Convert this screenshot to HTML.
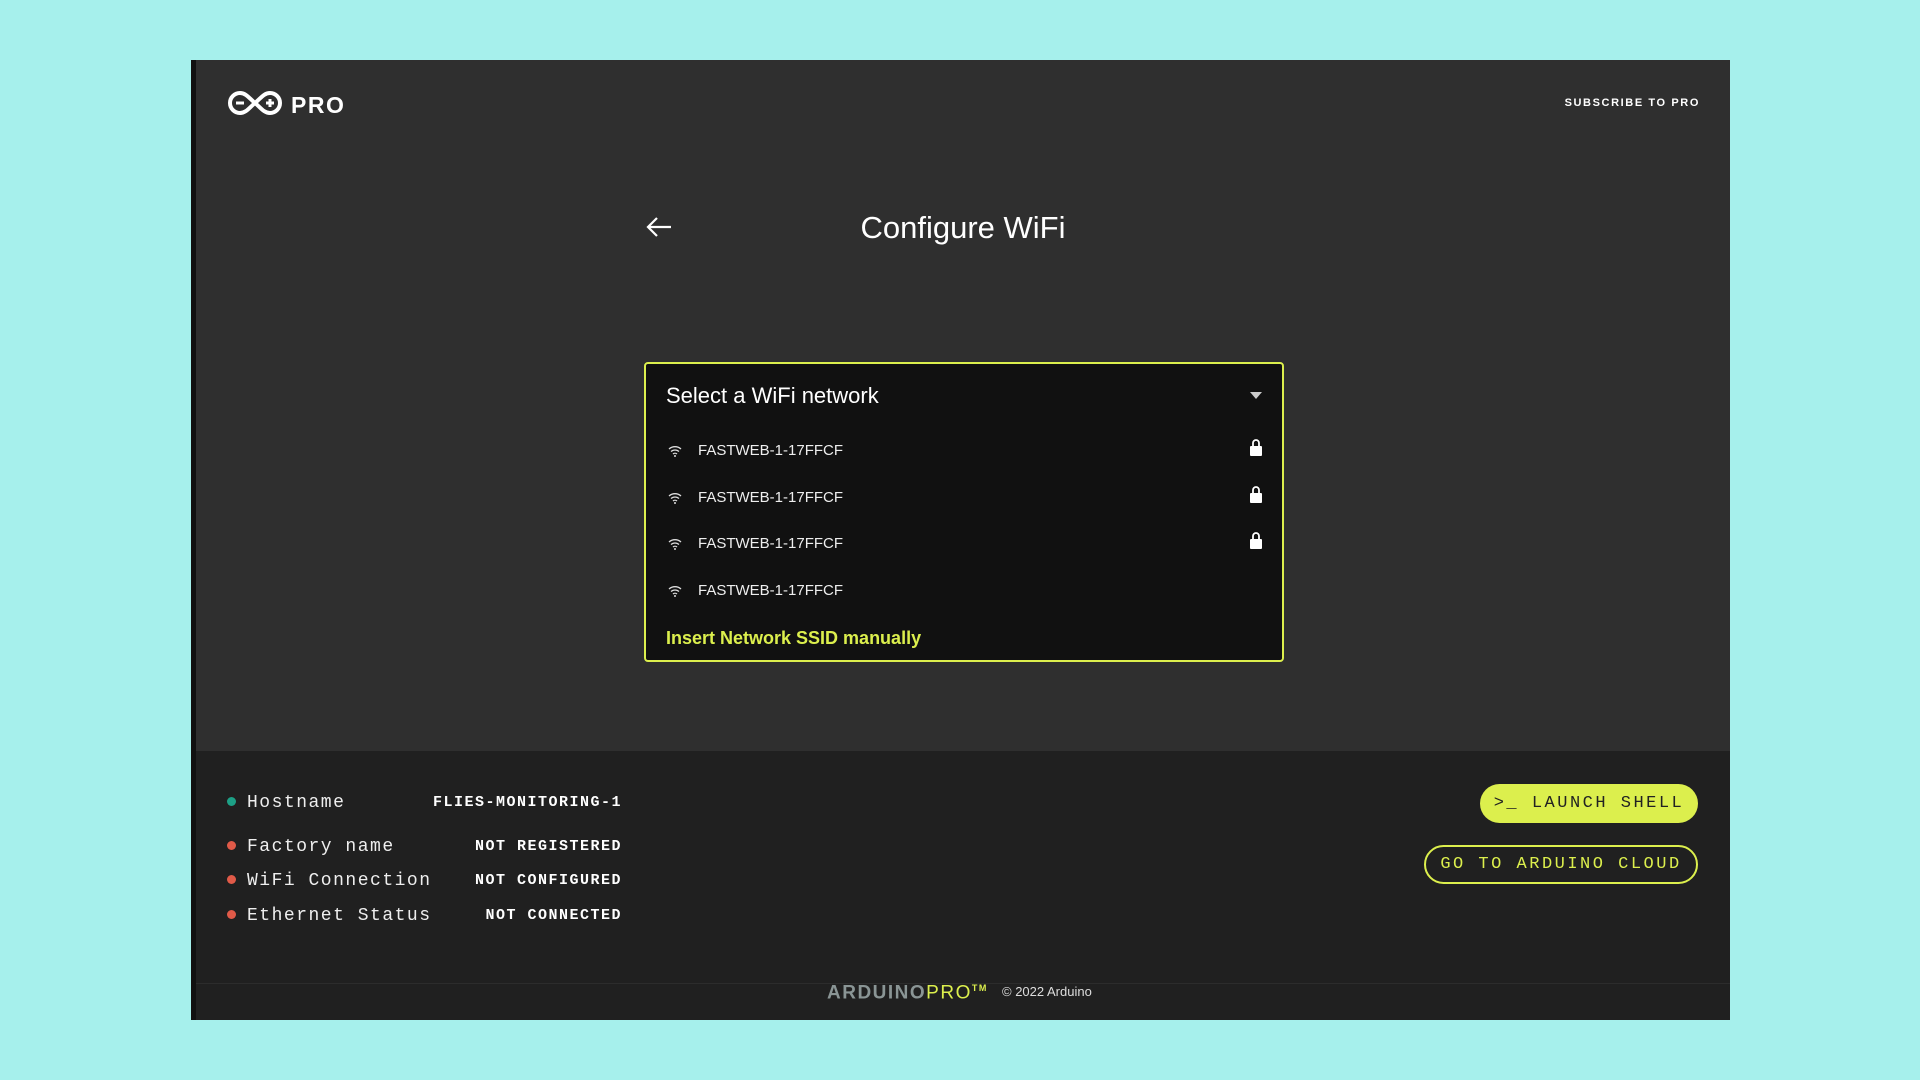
<!DOCTYPE html>
<html><head><meta charset="utf-8"><style>
*{margin:0;padding:0;box-sizing:border-box}
body{width:1920px;height:1080px;background:#a6f0ec;position:relative;overflow:hidden;font-family:"Liberation Sans",sans-serif}
.frame{position:absolute;left:191px;top:60px;width:1539px;height:960px;background:#2f2f2f;border-left:5px solid #111}
.bottom{position:absolute;left:0;right:0;top:691px;bottom:0;background:#202020}
.abs{position:absolute}
.mono{font-family:"Liberation Mono",monospace}
.row{position:absolute;left:0;width:426px;height:20px}
.dot{position:absolute;left:31px;top:4px;width:9px;height:9px;border-radius:50%}
.lab{position:absolute;left:51px;top:0;color:#eee;font-size:18px;letter-spacing:1.5px;line-height:20px}
.val{position:absolute;right:0;top:0;color:#fff;font-size:15px;font-weight:bold;letter-spacing:1.5px;line-height:20px}
.item{position:absolute;left:0;width:100%;height:22px}
.item .t{position:absolute;left:52px;top:0;color:#eee;font-size:15px;line-height:22px}
.item svg.w{position:absolute;left:22px;top:5px}
.item svg.l{position:absolute;right:20px;top:-2px}
</style></head><body>
<div class="frame">
  <svg class="abs" style="left:31px;top:30px" width="56" height="26" viewBox="0 0 56 26">
    <path d="M13 3a10 10 0 1 0 0 20c6 0 9-5 15-10c6-5 9-10 15-10a10 10 0 1 1 0 20c-6 0-9-5-15-10c-6-5-9-10-15-10z" fill="none" stroke="#fff" stroke-width="4"/>
    <rect x="9" y="11.5" width="8" height="3" fill="#fff"/>
    <rect x="39" y="11.5" width="8" height="3" fill="#fff"/><rect x="41.5" y="9" width="3" height="8" fill="#fff"/>
  </svg>
  <div class="abs" style="left:95px;top:31px;color:#fff;font-size:23px;font-weight:bold;letter-spacing:1.5px;line-height:28px">PRO</div>
  <div class="abs" style="right:30px;top:37px;color:#fff;font-size:11px;font-weight:bold;letter-spacing:1.6px">SUBSCRIBE TO PRO</div>

  <svg class="abs" style="left:449px;top:156px" width="28" height="22" viewBox="0 0 28 22"><path d="M26 11H3M12 2L3 11l9 9" fill="none" stroke="#fff" stroke-width="2.2"/></svg>
  <div class="abs" style="left:567px;width:400px;top:148px;text-align:center;color:#fff;font-size:31px;line-height:40px">Configure WiFi</div>

  <div class="abs" style="left:448px;top:302px;width:640px;height:300px;background:#111;border:2px solid #dcef4d;border-radius:4px">
    <div class="abs" style="left:20px;top:18px;color:#fff;font-size:22px;line-height:28px">Select a WiFi network</div>
    <svg class="abs" style="right:20px;top:28px" width="12" height="8"><path d="M0 0h12L6 7z" fill="#ccc"/></svg>
    <div class="item" style="top:76px"><svg class="w" width="14" height="12" viewBox="0 0 14 12"><path d="M1 4a9 9 0 0 1 12 0M3 6.5a6 6 0 0 1 8 0M5 9a3 3 0 0 1 4 0" fill="none" stroke="#ddd" stroke-width="1.3"/><circle cx="7" cy="11" r="1" fill="#ddd"/></svg><div class="t">FASTWEB-1-17FFCF</div><svg class="l" width="12" height="18" viewBox="0 0 12 18"><path d="M3 8V5a3 3 0 0 1 6 0v3" fill="none" stroke="#fff" stroke-width="1.8"/><rect x="0" y="8" width="12" height="10" rx="1" fill="#fff"/></svg></div>
    <div class="item" style="top:123px"><svg class="w" width="14" height="12" viewBox="0 0 14 12"><path d="M1 4a9 9 0 0 1 12 0M3 6.5a6 6 0 0 1 8 0M5 9a3 3 0 0 1 4 0" fill="none" stroke="#ddd" stroke-width="1.3"/><circle cx="7" cy="11" r="1" fill="#ddd"/></svg><div class="t">FASTWEB-1-17FFCF</div><svg class="l" width="12" height="18" viewBox="0 0 12 18"><path d="M3 8V5a3 3 0 0 1 6 0v3" fill="none" stroke="#fff" stroke-width="1.8"/><rect x="0" y="8" width="12" height="10" rx="1" fill="#fff"/></svg></div>
    <div class="item" style="top:169px"><svg class="w" width="14" height="12" viewBox="0 0 14 12"><path d="M1 4a9 9 0 0 1 12 0M3 6.5a6 6 0 0 1 8 0M5 9a3 3 0 0 1 4 0" fill="none" stroke="#ddd" stroke-width="1.3"/><circle cx="7" cy="11" r="1" fill="#ddd"/></svg><div class="t">FASTWEB-1-17FFCF</div><svg class="l" width="12" height="18" viewBox="0 0 12 18"><path d="M3 8V5a3 3 0 0 1 6 0v3" fill="none" stroke="#fff" stroke-width="1.8"/><rect x="0" y="8" width="12" height="10" rx="1" fill="#fff"/></svg></div>
    <div class="item" style="top:216px"><svg class="w" width="14" height="12" viewBox="0 0 14 12"><path d="M1 4a9 9 0 0 1 12 0M3 6.5a6 6 0 0 1 8 0M5 9a3 3 0 0 1 4 0" fill="none" stroke="#ddd" stroke-width="1.3"/><circle cx="7" cy="11" r="1" fill="#ddd"/></svg><div class="t">FASTWEB-1-17FFCF</div></div>
    <div class="abs" style="left:20px;top:262px;color:#dcef4d;font-size:18px;font-weight:bold;line-height:24px">Insert Network SSID manually</div>
  </div>

  <div class="bottom">
    <div class="row" style="top:42px"><div class="dot" style="background:#1da086"></div><div class="lab mono">Hostname</div><div class="val mono">FLIES-MONITORING-1</div></div>
    <div class="row" style="top:86px"><div class="dot" style="background:#e05a48"></div><div class="lab mono">Factory name</div><div class="val mono">NOT REGISTERED</div></div>
    <div class="row" style="top:120px"><div class="dot" style="background:#e05a48"></div><div class="lab mono">WiFi Connection</div><div class="val mono">NOT CONFIGURED</div></div>
    <div class="row" style="top:155px"><div class="dot" style="background:#e05a48"></div><div class="lab mono">Ethernet Status</div><div class="val mono">NOT CONNECTED</div></div>

    <div class="abs mono" style="left:1284px;top:33px;width:218px;height:39px;border-radius:20px;background:#dcef4d;color:#222;font-size:17px;letter-spacing:2.5px;line-height:39px;text-align:center">&gt;_ LAUNCH SHELL</div>
    <div class="abs mono" style="left:1228px;top:94px;width:274px;height:39px;border-radius:20px;border:2px solid #dcef4d;color:#dcef4d;font-size:17px;letter-spacing:2.5px;line-height:35px;text-align:center">GO TO ARDUINO CLOUD</div>

    <div class="abs" style="left:0;right:0;top:232px;height:1px;background:#2c2c2c"></div>
    <div class="abs" style="left:631px;top:225px;font-size:19px;font-weight:bold;letter-spacing:1.5px;line-height:24px"><span style="color:#8a9595">ARDUINO</span><span style="color:#dcef4d;font-weight:normal">PRO</span><sup style="color:#dcef4d;font-size:9px">TM</sup></div>
    <div class="abs" style="left:806px;top:232px;color:#ddd;font-size:13px;line-height:18px">© 2022 Arduino</div>
  </div>
</div>
</body></html>
